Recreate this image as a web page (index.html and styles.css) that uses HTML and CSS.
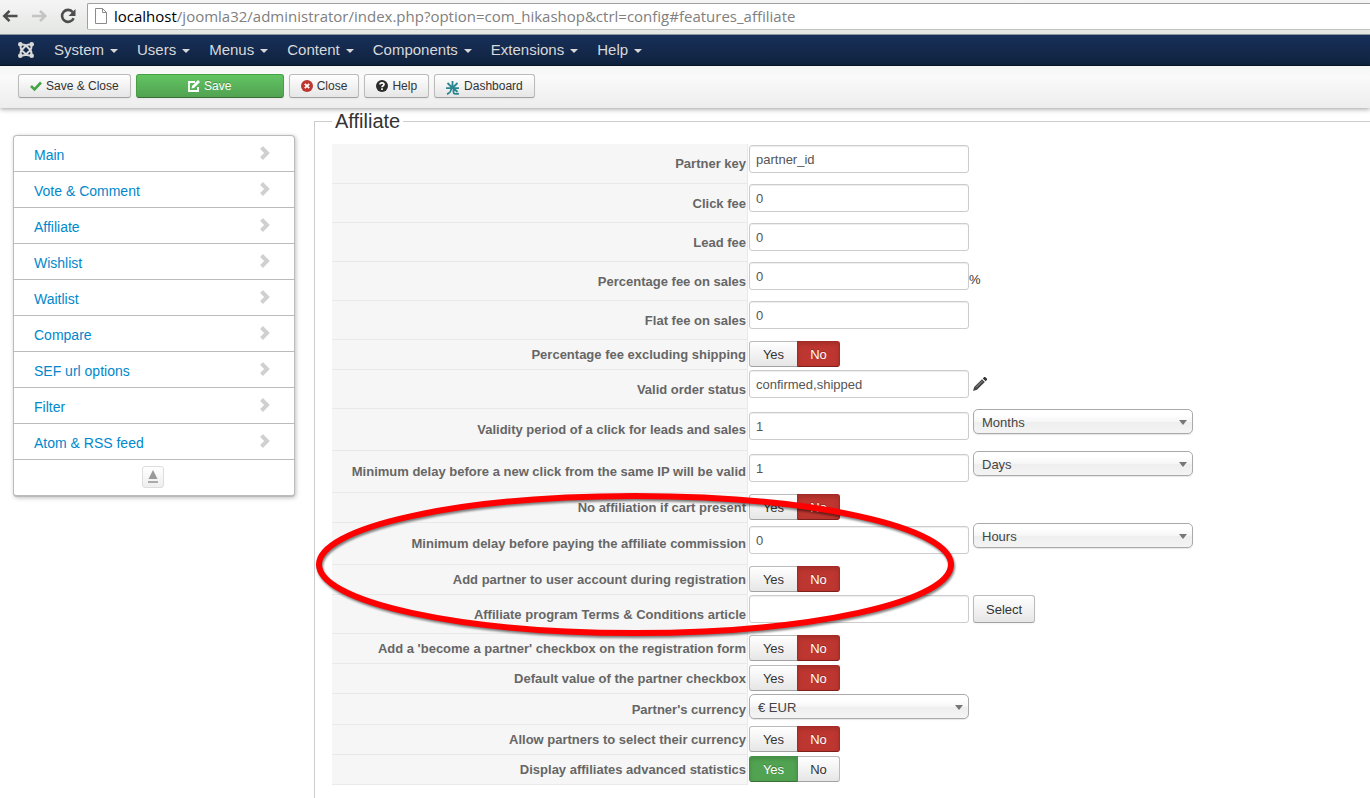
FILE: index.html
```html
<!DOCTYPE html>
<html lang="en">
<head>
  <meta charset="UTF-8">
  <meta name="viewport" content="width=device-width, initial-scale=1.0">
  <title>HikaShop - Configuration</title>
  <link rel="stylesheet" href="styles.css">
</head>
<body>
  <div class="browser-bar">
    <button type="button" class="browser-btn" aria-label="Back">
      <svg width="18" height="18" viewBox="0 0 18 18"><path d="M16.500 9H3.500M8.500 3.800L3.300 9l5.200 5.200" fill="none" stroke="#4d4d4d" stroke-width="2.600"/></svg>
    </button>
    <button type="button" class="browser-btn" aria-label="Forward">
      <svg width="18" height="18" viewBox="0 0 18 18"><path d="M2 9h13M10 3.800L15.200 9l-5.200 5.200" fill="none" stroke="#c3c3c3" stroke-width="2.600"/></svg>
    </button>
    <button type="button" class="browser-btn" aria-label="Reload">
      <svg width="18" height="18" viewBox="0 0 18 18"><path d="M13.800 5.200A6 6 0 1 0 14.600 11.200" fill="none" stroke="#4d4d4d" stroke-width="2.600"/><path d="M16.500 2v7h-7z" fill="#4d4d4d"/></svg>
    </button>
    <div class="url">
      <svg width="12" height="16" viewBox="0 0 12 16"><path d="M.5.5H7.500L11.500 4.500V15.500H.5zM7.500.5V4.500H11.500" fill="#fff" stroke="#8a8a8a"/></svg>
      <span><b>localhost</b>/joomla32/administrator/index.php?option=com_hikashop&amp;ctrl=config#features_affiliate</span>
    </div>
  </div>

  <nav class="navbar">
    <a class="logo" href="#" aria-label="Joomla">
      <svg width="16" height="16" viewBox="0 0 16 16" fill="none" stroke="#d9d9d9">
        <path d="M2.800 3C1.800 6 3 7.500 4.500 9L9 13.200M3 2.800C6 1.800 7.500 3 9 4.500L13.200 9M13.200 3C14.200 6 13 7.500 11.500 9L7 13.200M13 2.800C10 1.800 8.500 3 7 4.500L2.800 9M2.800 13C1.800 10 3 8.500 4.500 7M13.200 13C14.200 10 13 8.500 11.500 7M3 13.200C6 14.200 7.500 13 9 11.500M13 13.200C10 14.200 8.500 13 7 11.500" stroke-width="1.900"/>
        <g fill="#d9d9d9" stroke="none"><circle cx="2.300" cy="2.300" r="2.300"/><circle cx="13.700" cy="2.300" r="2.300"/><circle cx="2.300" cy="13.700" r="2.300"/><circle cx="13.700" cy="13.700" r="2.300"/></g>
      </svg>
    </a>
    <a href="#">System</a>
    <a href="#">Users</a>
    <a href="#">Menus</a>
    <a href="#">Content</a>
    <a href="#">Components</a>
    <a href="#">Extensions</a>
    <a href="#">Help</a>
  </nav>

  <div class="toolbar">
    <button type="button" class="btn">
      <svg width="12" height="12" viewBox="0 0 12 12"><path d="M1 6l3.500 3.500L11 2.500" fill="none" stroke="#46a546" stroke-width="2.600"/></svg>
      Save &amp; Close
    </button>
    <button type="button" class="btn btn-save">
      <svg width="12" height="12" viewBox="0 0 12 12"><path d="M7 2H1v9h9V7" fill="none" stroke="#fff" stroke-width="1.800"/><path d="M3.500 8.500l.5-2.500L10 0l2 2-6 6z" fill="#fff"/></svg>
      Save
    </button>
    <button type="button" class="btn">
      <svg width="12" height="12" viewBox="0 0 12 12"><circle cx="6" cy="6" r="6" fill="#bd362f"/><path d="M3.800 3.800l4.400 4.400M8.200 3.800L3.800 8.200" stroke="#fff" stroke-width="1.800"/></svg>
      Close
    </button>
    <button type="button" class="btn">
      <svg width="12" height="12" viewBox="0 0 12 12"><circle cx="6" cy="6" r="6" fill="#2b2b2b"/><path d="M4 4.600C4 2.300 8 2.300 8 4.500 8 5.900 6 5.700 6 7.300M6 8.200v1.700" fill="none" stroke="#fff" stroke-width="1.700"/></svg>
      Help
    </button>
    <button type="button" class="btn">
      <svg class="star" width="14" height="14" viewBox="0 0 14 14" fill="none" stroke="#2a8690" stroke-width="1.800"><path d="M6.500 0v7M1.500 2L6 6.500M11.500 2L7 6.500M0 7.200h13M5.500 7C5.200 10 4 12 1 13.200M7.500 7v4.200c0 2 2.500 2 5.500 1.500M8.500 8l3 3"/></svg>
      Dashboard
    </button>
  </div>

  <div class="content">
    <div class="menu">
      <ul>
        <li><a href="#main">Main</a><svg width="10" height="14" viewBox="0 0 10 14"><path d="M1.500 1.500L7 7l-5.500 5.500" /></svg></li>
        <li><a href="#vote">Vote &amp; Comment</a><svg width="10" height="14" viewBox="0 0 10 14"><path d="M1.500 1.500L7 7l-5.500 5.500" /></svg></li>
        <li><a href="#affiliate">Affiliate</a><svg width="10" height="14" viewBox="0 0 10 14"><path d="M1.500 1.500L7 7l-5.500 5.500" /></svg></li>
        <li><a href="#wishlist">Wishlist</a><svg width="10" height="14" viewBox="0 0 10 14"><path d="M1.500 1.500L7 7l-5.500 5.500" /></svg></li>
        <li><a href="#waitlist">Waitlist</a><svg width="10" height="14" viewBox="0 0 10 14"><path d="M1.500 1.500L7 7l-5.500 5.500" /></svg></li>
        <li><a href="#compare">Compare</a><svg width="10" height="14" viewBox="0 0 10 14"><path d="M1.500 1.500L7 7l-5.500 5.500" /></svg></li>
        <li><a href="#sef">SEF url options</a><svg width="10" height="14" viewBox="0 0 10 14"><path d="M1.500 1.500L7 7l-5.500 5.500" /></svg></li>
        <li><a href="#filter">Filter</a><svg width="10" height="14" viewBox="0 0 10 14"><path d="M1.500 1.500L7 7l-5.500 5.500" /></svg></li>
        <li><a href="#feed">Atom &amp; RSS feed</a><svg width="10" height="14" viewBox="0 0 10 14"><path d="M1.500 1.500L7 7l-5.500 5.500" /></svg></li>
      </ul>
      <div class="menu-top">
        <button type="button" aria-label="Back to top">
          <svg width="12" height="14" viewBox="0 0 12 14"><path d="M6 0l4.500 9h-9z" fill="#999"/><path d="M1 11h10v2H1z" fill="#aaa"/></svg>
        </button>
      </div>
    </div>

    <fieldset class="features">
      <legend>Affiliate</legend>
      <table class="admintable">
        <tr class="first">
          <td class="key"><label for="partner_key">Partner key</label></td>
          <td><input type="text" id="partner_key" value="partner_id"></td>
        </tr>
        <tr>
          <td class="key"><label for="click_fee">Click fee</label></td>
          <td><input type="text" id="click_fee" value="0"></td>
        </tr>
        <tr>
          <td class="key"><label for="lead_fee">Lead fee</label></td>
          <td><input type="text" id="lead_fee" value="0"></td>
        </tr>
        <tr>
          <td class="key"><label for="percent_fee">Percentage fee on sales</label></td>
          <td><div class="field"><input type="text" id="percent_fee" value="0"><span class="unit">%</span></div></td>
        </tr>
        <tr>
          <td class="key"><label for="flat_fee">Flat fee on sales</label></td>
          <td><input type="text" id="flat_fee" value="0"></td>
        </tr>
        <tr class="radio-row">
          <td class="key">Percentage fee excluding shipping</td>
          <td><div class="toggle"><label><input type="radio" name="exclude_shipping" value="1">Yes</label><label><input type="radio" name="exclude_shipping" value="0" checked>No</label></div></td>
        </tr>
        <tr>
          <td class="key"><label for="order_status">Valid order status</label></td>
          <td>
            <div class="field spaced">
              <input type="text" id="order_status" value="confirmed,shipped">
              <svg class="pencil" width="14" height="14" viewBox="0 0 14 14"><path d="M0 14l1.200-4L9 2.200l2.800 2.800L4 12.800z" fill="#444"/><path d="M9.800 1.400L11.200 0h1L14 1.800v1L12.600 4.200z" fill="#333"/><path d="M3 10.500L9.500 4" stroke="#999"/></svg>
            </div>
          </td>
        </tr>
        <tr class="period-row">
          <td class="key"><label for="validity">Validity period of a click for leads and sales</label></td>
          <td>
            <div class="field spaced">
              <input type="text" id="validity" value="1">
              <span class="select"><select aria-label="Validity unit"><option>Months</option><option>Days</option><option>Hours</option></select></span>
            </div>
          </td>
        </tr>
        <tr class="period-row">
          <td class="key"><label for="click_delay">Minimum delay before a new click from the same IP will be valid</label></td>
          <td>
            <div class="field spaced">
              <input type="text" id="click_delay" value="1">
              <span class="select"><select aria-label="Click delay unit"><option>Days</option><option>Hours</option><option>Months</option></select></span>
            </div>
          </td>
        </tr>
        <tr class="radio-row">
          <td class="key">No affiliation if cart present</td>
          <td><div class="toggle"><label><input type="radio" name="no_affiliation" value="1">Yes</label><label><input type="radio" name="no_affiliation" value="0" checked>No</label></div></td>
        </tr>
        <tr class="period-row">
          <td class="key"><label for="pay_delay">Minimum delay before paying the affiliate commission</label></td>
          <td>
            <div class="field spaced">
              <input type="text" id="pay_delay" value="0">
              <span class="select"><select aria-label="Payment delay unit"><option>Hours</option><option>Days</option><option>Months</option></select></span>
            </div>
          </td>
        </tr>
        <tr class="radio-row">
          <td class="key">Add partner to user account during registration</td>
          <td><div class="toggle"><label><input type="radio" name="add_partner" value="1">Yes</label><label><input type="radio" name="add_partner" value="0" checked>No</label></div></td>
        </tr>
        <tr>
          <td class="key"><label for="terms">Affiliate program Terms &amp; Conditions article</label></td>
          <td>
            <div class="field spaced">
              <input type="text" id="terms">
              <button type="button" class="btn btn-select">Select</button>
            </div>
          </td>
        </tr>
        <tr class="radio-row">
          <td class="key">Add a 'become a partner' checkbox on the registration form</td>
          <td><div class="toggle"><label><input type="radio" name="become_partner" value="1">Yes</label><label><input type="radio" name="become_partner" value="0" checked>No</label></div></td>
        </tr>
        <tr class="radio-row">
          <td class="key">Default value of the partner checkbox</td>
          <td><div class="toggle"><label><input type="radio" name="partner_default" value="1">Yes</label><label><input type="radio" name="partner_default" value="0" checked>No</label></div></td>
        </tr>
        <tr class="currency-row">
          <td class="key"><label for="currency">Partner's currency</label></td>
          <td><span class="select"><select id="currency"><option>€ EUR</option></select></span></td>
        </tr>
        <tr class="radio-row">
          <td class="key">Allow partners to select their currency</td>
          <td><div class="toggle"><label><input type="radio" name="select_currency" value="1">Yes</label><label><input type="radio" name="select_currency" value="0" checked>No</label></div></td>
        </tr>
        <tr class="radio-row">
          <td class="key">Display affiliates advanced statistics</td>
          <td><div class="toggle"><label><input type="radio" name="advanced_stats" value="1" checked>Yes</label><label><input type="radio" name="advanced_stats" value="0">No</label></div></td>
        </tr>
      </table>

      <!-- red marker around the commission settings -->
      <svg class="marker" width="638" height="144" viewBox="0 0 638 144"><ellipse cx="319" cy="71.500" rx="316" ry="68.500" fill="none" stroke="#f00" stroke-width="6"/></svg>
    </fieldset>
  </div>
</body>
</html>
```

FILE: styles.css
```css
* {
  box-sizing: border-box;
}

body {
  margin: 0;
  min-height: 100vh;
  display: flex;
  flex-direction: column;
  overflow: hidden;
  background: #fff;
  color: #333;
  font-family: "Liberation Sans", Arial, sans-serif;
  font-size: 13px;
  line-height: 18px;
}

button, input, select {
  font-family: inherit;
  font-size: 13px;
}

a {
  text-decoration: none;
}

/* browser bar */
.browser-bar {
  display: flex;
  height: 35px;
  padding-top: 3px;
  background: linear-gradient(#f5f5f5, #e4e6e2);
  border-bottom: 1px solid #8f959b;
}

.browser-btn {
  width: 29px;
  height: 27px;
  padding: 0 0 2px 1px;
  border: 0;
  background: none;
  text-align: left;
}

.browser-btn svg {
  display: block;
}

.url {
  display: flex;
  flex: 1;
  align-items: center;
  gap: 7px;
  height: 27px;
  padding: 0 0 1px 7px;
  background: #fff;
  border: 1px solid #a0a0a0;
  border-bottom-color: #c0c4c0;
  border-right: 0;
  border-radius: 2px 0 0 2px;
  color: #808080;
  font-family: "Open Sans", "Noto Sans", sans-serif;
  font-size: 15px;
  white-space: nowrap;
}

.url b {
  color: #000;
  font-weight: normal;
}

/* top menu */
.navbar {
  display: flex;
  align-items: center;
  gap: 19px;
  height: 31px;
  padding-left: 18px;
  background: linear-gradient(#17305a, #10223e);
  border-bottom: 1px solid #0b182c;
}

.navbar a {
  display: flex;
  align-items: center;
  color: #d9d9d9;
  font-size: 15px;
}

.navbar a::after {
  content: "";
  margin: 2px 0 0 6px;
  border: 4px solid transparent;
  border-top-color: #d9d9d9;
  border-bottom: 0;
}

.navbar .logo {
  padding-right: 1px;
}

.navbar .logo::after {
  display: none;
}

/* toolbar */
.toolbar {
  display: flex;
  gap: 5px;
  height: 42px;
  padding: 8px 18px;
  background: linear-gradient(#f5f5f5, #fafafa 25%, #ededed);
  box-shadow: 0 1px 5px rgba(0, 0, 0, 0.4);
}

.btn {
  display: flex;
  align-items: center;
  justify-content: center;
  gap: 4px;
  height: 24px;
  padding: 0 11px;
  background: linear-gradient(#fff, #e6e6e6);
  border: 1px solid #bbb;
  border-bottom-color: #a2a2a2;
  border-radius: 3px;
  box-shadow: 0 1px 2px rgba(0, 0, 0, 0.05);
  color: #333;
  font-size: 12px;
}

.btn-save {
  width: 148px;
  background: linear-gradient(#62c462, #51a351);
  border-color: #46a046 #46a046 #387038;
  color: #fff;
  text-shadow: 0 -1px 0 rgba(0, 0, 0, 0.25);
}

.btn .star {
  margin-top: 3px;
}

/* left menu */
.content {
  display: flex;
  flex: 1;
  align-items: flex-start;
  gap: 19px;
  padding-left: 13px;
}

.menu {
  width: 282px;
  flex: none;
  margin-top: 27px;
  background: #fff;
  border: 1px solid #bbb;
  border-bottom-width: 2px;
  border-radius: 4px;
  box-shadow: 1px 1px 4px rgba(0, 0, 0, 0.25);
}

.menu ul {
  margin: 0;
  padding: 0;
  list-style: none;
}

.menu li {
  display: flex;
  align-items: center;
  justify-content: space-between;
  height: 36px;
  padding: 0 24px 0 20px;
  border-bottom: 1px solid #bbb;
}

.menu li a {
  padding-top: 3px;
  color: #08c;
  font-size: 14px;
}

.menu li svg {
  margin-bottom: 2px;
  fill: none;
  stroke: #d0d0d0;
  stroke-width: 4;
}

.menu-top {
  display: flex;
  justify-content: center;
  height: 35px;
  padding: 6px 2px 0 0;
}

.menu-top button {
  width: 22px;
  height: 22px;
  padding: 3px 4px;
  background: linear-gradient(#fff, #eee);
  border: 1px solid #ddd;
  border-radius: 3px;
}

.menu-top svg {
  display: block;
}

/* settings */
.features {
  position: relative;
  flex: 1;
  align-self: stretch;
  min-width: 0;
  margin: 1px 0 0;
  padding: 0 0 0 17px;
  border: 1px solid #ccc;
  border-width: 1px 0 0 1px;
}

.features legend {
  padding: 0 3px;
  font-size: 20px;
  line-height: 24px;
}

.admintable {
  margin-top: 11px;
  border-spacing: 0;
}

.admintable td {
  height: 39px;
  padding: 0 0 0 1px;
  vertical-align: top;
}

.admintable .key {
  width: 416px;
  padding: 2px 1px 0 0;
  background: #f6f6f6;
  border-right: 1px solid #e9e9e9;
  border-bottom: 1px solid #e9e9e9;
  color: #666;
  font-weight: bold;
  text-align: right;
  vertical-align: middle;
  white-space: nowrap;
}

.admintable .first .key,
.admintable .radio-row .key,
.admintable .period-row .key {
  padding-top: 0;
}

.admintable .first td {
  height: 40px;
}

.admintable .first td + td {
  padding-top: 1px;
}

.admintable .radio-row td {
  height: 30px;
}

.admintable .radio-row td + td {
  padding-top: 1px;
}

.admintable .period-row td {
  height: 42px;
}

.admintable .currency-row td {
  height: 31px;
}

.field {
  display: flex;
}

.spaced {
  gap: 4px;
}

.period-row input {
  margin-top: 3px;
}

input[type="text"] {
  display: block;
  width: 220px;
  height: 28px;
  padding: 0 6px;
  background: #fff;
  border: 1px solid #ccc;
  border-radius: 3px;
  box-shadow: inset 0 1px 1px rgba(0, 0, 0, 0.075);
  color: #555;
}

.unit {
  padding-top: 9px;
}

.pencil {
  margin-top: 7px;
}

.select {
  position: relative;
  display: block;
  width: 220px;
}

.select select {
  display: block;
  appearance: none;
  width: 100%;
  height: 25px;
  padding: 1px 8px 0;
  background: linear-gradient(#fff 20%, #f6f6f6 50%, #eee 52%, #f4f4f4);
  border: 1px solid #aaa;
  border-radius: 5px;
  box-shadow: 0 1px 1px rgba(0, 0, 0, 0.1);
  color: #444;
}

.select::after {
  content: "";
  position: absolute;
  top: 11px;
  right: 6px;
  border: 4px solid transparent;
  border-top: 5px solid #777;
  border-bottom: 0;
  pointer-events: none;
}

.btn-select {
  height: 28px;
  padding: 0 12px;
  font-size: 13px;
}

/* yes / no switches */
.toggle {
  display: flex;
}

.toggle label {
  position: relative;
  width: 43px;
  height: 26px;
  background: linear-gradient(#fff, #e6e6e6);
  border: 1px solid #bbb;
  border-bottom-color: #a2a2a2;
  line-height: 25px;
  text-align: center;
}

.toggle label:first-child {
  width: 49px;
  border-radius: 3px 0 0 3px;
}

.toggle label:last-child {
  margin-left: -1px;
  border-radius: 0 3px 3px 0;
}

.toggle input {
  position: absolute;
  opacity: 0;
  pointer-events: none;
}

.toggle label:has(:checked) {
  z-index: 1;
  color: #fff;
  box-shadow: inset 0 2px 4px rgba(0, 0, 0, 0.15);
  text-shadow: 0 -1px 0 rgba(0, 0, 0, 0.25);
}

.toggle label:has([value="0"]:checked) {
  background: #bd362f;
  border-color: #a52a25 #a52a25 #7d201b;
}

.toggle label:has([value="1"]:checked) {
  background: #51a351;
  border-color: #46904a #46904a #387038;
}

.marker {
  position: absolute;
  top: 360px;
  left: 1px;
  z-index: 2;
  filter: drop-shadow(1px 2px 1px rgba(0, 0, 0, 0.5));
  pointer-events: none;
}
```
